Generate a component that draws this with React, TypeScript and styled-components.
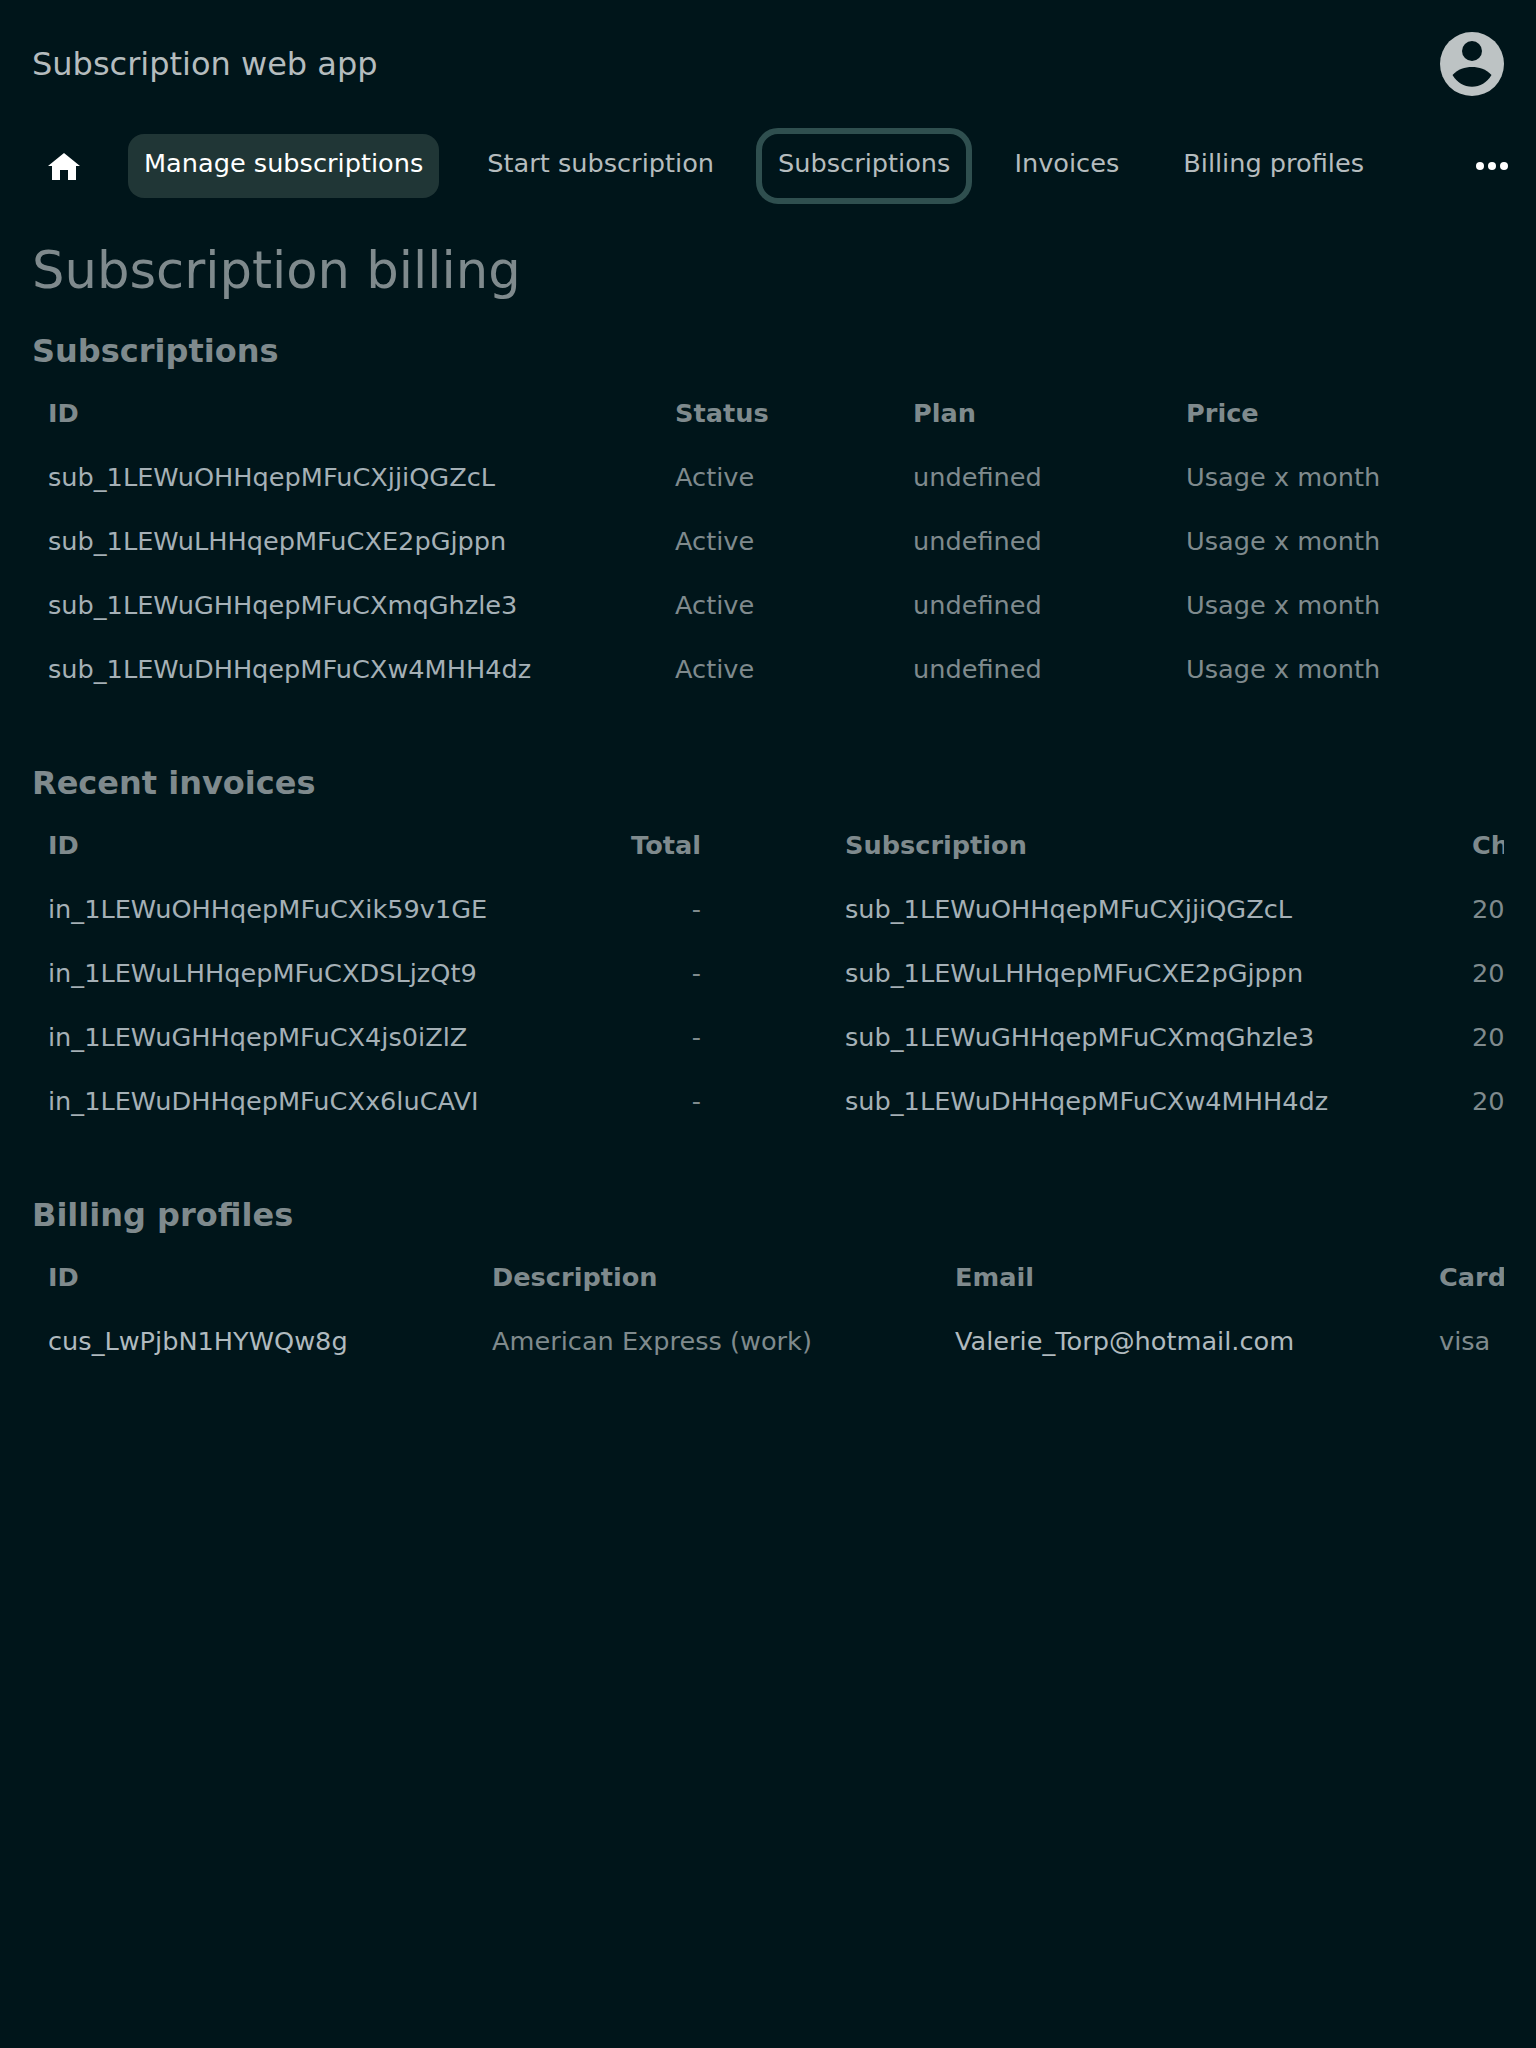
import React from "react";
import styled, { createGlobalStyle } from "styled-components";

const Global = createGlobalStyle`
  html, body { margin: 0; padding: 0; background: #00151a; }
  body { font-family: "DejaVu Sans", sans-serif; min-height: 2048px; }
`;
const Page = styled.div`
  width: 1536px; height: 2048px; background: #00151a; box-sizing: border-box; overflow: hidden;
`;
const Header = styled.header`
  height: 128px; padding: 0 32px; display: flex; align-items: center; justify-content: space-between;
`;
const AppTitle = styled.div`
  font-size: 32px; color: #b5bcbe; line-height: 40px;
`;
const Avatar = styled.svg`
  width: 64px; height: 64px; display: block;
`;
const Nav = styled.nav`
  height: 64px; margin-top: 6px; padding: 0 32px; display: flex; align-items: center; gap: 32px;
`;
const NavItem = styled.a<{ $active?: boolean; $focus?: boolean }>`
  height: 64px; box-sizing: border-box; padding: 13px 16px 0; display: block;
  font-size: 25.6px; line-height: 32px; border-radius: 16px; white-space: nowrap;
  color: ${(p) => (p.$active ? "#ffffff" : "#b5bcbe")};
  background: ${(p) => (p.$active ? "#203636" : "transparent")};
  ${(p) => (p.$focus ? "outline: 6px solid #2f4f4f; outline-offset: 0;" : "")}
`;
const HomeButton = styled.div`
  width: 64px; height: 64px; display: flex; align-items: center; justify-content: center;
`;
const MoreIcon = styled.svg`
  width: 32px; height: 32px; margin-left: auto; margin-right: -4px;
`;
const Content = styled.main`
  padding: 0 32px;
`;
const Title = styled.h1`
  margin: 40px 0 0; font-size: 51.2px; line-height: 64px; font-weight: 400; color: #7f8a8d;
`;
const SectionTitle = styled.h2`
  margin: 0 0 10px; font-size: 32px; line-height: 40px; font-weight: 700; color: #7f8a8d;
`;
const Section = styled.section`
  margin-top: 29px; margin-bottom: 62px;
  & + & { margin-top: 0; }
`;
const TableBox = styled.div`
  overflow: hidden;
`;
const Row = styled.div<{ $cols: string }>`
  display: grid; grid-template-columns: ${(p) => p.$cols}; height: 64px; align-items: center;
`;
const Cell = styled.div<{ $tone?: "head" | "id" | "muted" | "bright"; $end?: boolean }>`
  padding: 0 ${(p) => (p.$end ? "128px" : "16px")} 0 16px; font-size: 25.6px; line-height: 32px; white-space: nowrap; overflow: hidden;
  text-align: ${(p) => (p.$end ? "right" : "left")};
  font-weight: ${(p) => (p.$tone === "head" ? 700 : 400)};
  color: ${(p) => (p.$tone === "head" || p.$tone === "muted" ? "#7f8a8d" : p.$tone === "bright" ? "#b0babf" : "#a5b0b6")};
`;

const subCols = "627px 238px 273px 300px";
const invCols = "541px 256px 627px 300px";
const profCols = "444px 463px 484px 300px";

const subs = ["sub_1LEWuOHHqepMFuCXjjiQGZcL", "sub_1LEWuLHHqepMFuCXE2pGjppn", "sub_1LEWuGHHqepMFuCXmqGhzle3", "sub_1LEWuDHHqepMFuCXw4MHH4dz"];
const invs = ["in_1LEWuOHHqepMFuCXik59v1GE", "in_1LEWuLHHqepMFuCXDSLjzQt9", "in_1LEWuGHHqepMFuCX4js0iZlZ", "in_1LEWuDHHqepMFuCXx6luCAVI"];

export default function App() {
  return (
    <Page>
      <Global />
      <Header>
        <AppTitle>Subscription web app</AppTitle>
        <Avatar viewBox="0 0 64 64">
          <circle cx="32" cy="32" r="32" fill="#bdc3c4" />
          <circle cx="32" cy="19" r="10" fill="#00151a" />
          <path fill="#00151a" d="M12.5 43C18 37 25 35 32 35C39 35 46 37 51.5 43C47 50.5 40 54.7 32 54.7C24 54.7 17 50.5 12.5 43Z" />
        </Avatar>
      </Header>
      <Nav>
        <HomeButton>
          <svg width="32" height="32" viewBox="0 0 32 32"><path fill="#fff" d="M16 3L32 16H28V30H20V20H12V30H4V16H0Z" /></svg>
        </HomeButton>
        <NavItem $active>Manage subscriptions</NavItem>
        <NavItem>Start subscription</NavItem>
        <NavItem $focus>Subscriptions</NavItem>
        <NavItem>Invoices</NavItem>
        <NavItem>Billing profiles</NavItem>
        <MoreIcon viewBox="0 0 32 32">
          <circle cx="4" cy="16" r="4" fill="#fff" /><circle cx="16" cy="16" r="4" fill="#fff" /><circle cx="28" cy="16" r="4" fill="#fff" />
        </MoreIcon>
      </Nav>
      <Content>
        <Title>Subscription billing</Title>
        <Section>
          <SectionTitle>Subscriptions</SectionTitle>
          <TableBox>
            <Row $cols={subCols}><Cell $tone="head">ID</Cell><Cell $tone="head">Status</Cell><Cell $tone="head">Plan</Cell><Cell $tone="head">Price</Cell></Row>
            {subs.map((s) => (
              <Row $cols={subCols} key={s}><Cell $tone="id">{s}</Cell><Cell $tone="muted">Active</Cell><Cell $tone="muted">undefined</Cell><Cell $tone="muted">Usage x month</Cell></Row>
            ))}
          </TableBox>
        </Section>
        <Section>
          <SectionTitle>Recent invoices</SectionTitle>
          <TableBox>
            <Row $cols={invCols}><Cell $tone="head">ID</Cell><Cell $tone="head" $end>Total</Cell><Cell $tone="head">Subscription</Cell><Cell $tone="head">Charge date</Cell></Row>
            {invs.map((s, i) => (
              <Row $cols={invCols} key={s}><Cell $tone="id">{s}</Cell><Cell $tone="muted" $end>-</Cell><Cell $tone="id">{subs[i]}</Cell><Cell $tone="muted">2022-06-17</Cell></Row>
            ))}
          </TableBox>
        </Section>
        <Section>
          <SectionTitle>Billing profiles</SectionTitle>
          <TableBox>
            <Row $cols={profCols}><Cell $tone="head">ID</Cell><Cell $tone="head">Description</Cell><Cell $tone="head">Email</Cell><Cell $tone="head">Card</Cell></Row>
            <Row $cols={profCols}><Cell $tone="bright">cus_LwPjbN1HYWQw8g</Cell><Cell $tone="muted">American Express (work)</Cell><Cell $tone="bright">Valerie_Torp@hotmail.com</Cell><Cell $tone="muted">visa</Cell></Row>
          </TableBox>
        </Section>
      </Content>
    </Page>
  );
}
